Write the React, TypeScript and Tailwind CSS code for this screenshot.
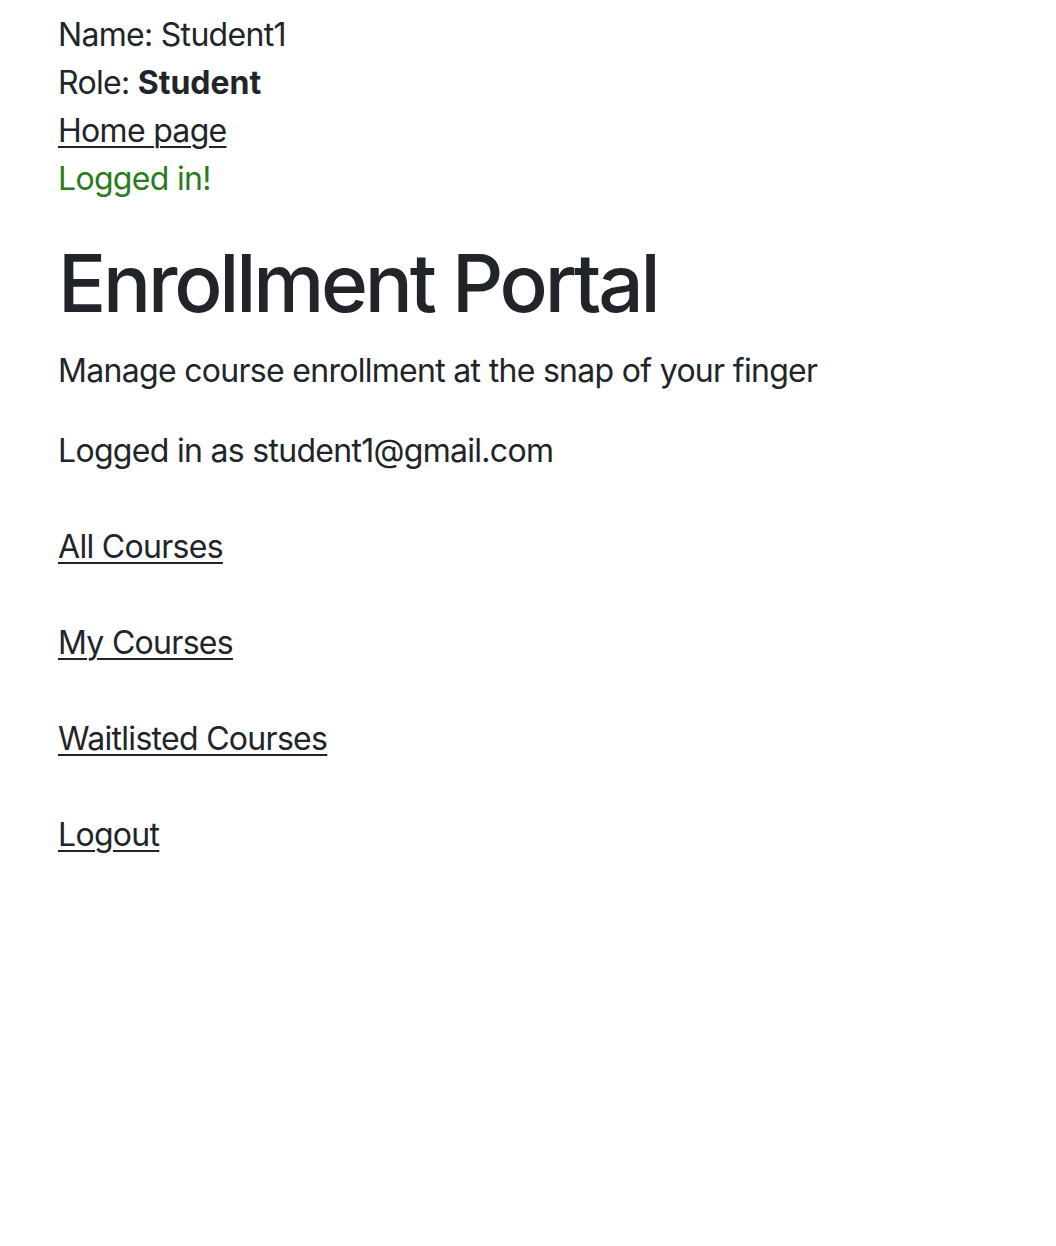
export default function App() {
  return (
    <div className="min-h-[1246px] bg-white px-[58px] pt-[11px] text-[32px] leading-[48px] tracking-[-0.7px] text-[#212529] font-['Inter','Noto_Sans',sans-serif]">
      <div>Name: Student1</div>
      <div>
        Role: <b className="font-bold tracking-[0px]">Student</b>
      </div>
      <div>
        <a href="#" className="underline underline-offset-[4px] decoration-2">Home page</a>
      </div>
      <p className="mb-[32px] text-[#2b7a1c]">Logged in!</p>

      <h1 className="mb-[16px] text-[80px] leading-[96px] font-medium tracking-[-3.2px]">Enrollment Portal</h1>
      <p className="mb-[32px]">Manage course enrollment at the snap of your finger</p>
      <p>Logged in as student1@gmail.com</p>

      <div className="mt-[48px] flex flex-col items-start gap-[48px]">
        <a href="#" className="underline underline-offset-[4px] decoration-2">All Courses</a>
        <a href="#" className="underline underline-offset-[4px] decoration-2">My Courses</a>
        <a href="#" className="underline underline-offset-[4px] decoration-2">Waitlisted Courses</a>
        <a href="#" className="underline underline-offset-[4px] decoration-2">Logout</a>
      </div>
    </div>
  );
}
